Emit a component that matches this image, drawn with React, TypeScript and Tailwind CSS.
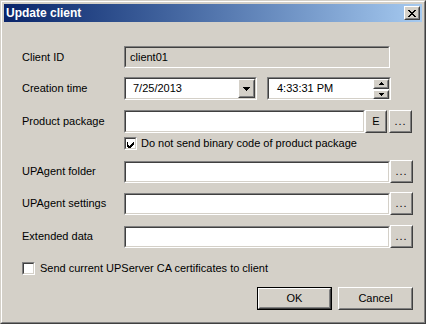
import React from 'react';
import cn from 'clsx';

const Sunken: React.FC<{ className?: string; inner?: string; bg?: string; children?: React.ReactNode }> = ({
  className,
  inner,
  bg = 'bg-white',
  children
}) => (
  <div className={cn('border border-t-[#808080] border-l-[#808080] border-b-white border-r-white', className)}>
    <div className={cn('h-full border border-t-[#404040] border-l-[#404040] border-b-[#d4d0c8] border-r-[#d4d0c8]', bg, inner)}>
      {children}
    </div>
  </div>
);

const Raised: React.FC<{ className?: string; inner?: string; children?: React.ReactNode }> = ({ className, inner, children }) => (
  <div className={cn('border border-t-white border-l-white border-b-[#404040] border-r-[#404040] bg-[#d4d0c8]', className)}>
    <div className={cn('h-full border border-t-[#d4d0c8] border-l-[#d4d0c8] border-b-[#808080] border-r-[#808080] flex items-center justify-center', inner)}>
      {children}
    </div>
  </div>
);

const Check: React.FC<{ checked?: boolean }> = ({ checked }) => (
  <Sunken className="w-[13px] h-[13px] shrink-0">
    {checked && (
      <svg width="9" height="9" viewBox="0 0 9 9" shapeRendering="crispEdges">
        <path d="M1 3h1v3h1v1h1v-1h1v-1h1v-1h1v-1h1v3h-1v1h-1v1h-1v1h-1v1h-1v-1h-1v-1h-1z" fill="#000" />
      </svg>
    )}
  </Sunken>
);

const Dots = () => <span className="tracking-[1px] leading-none">...</span>;

const Label: React.FC<{ children: React.ReactNode }> = ({ children }) => (
  <div className="w-[102px] shrink-0">{children}</div>
);

export default function App() {
  return (
    <div className="w-[426px] h-[324px] border border-t-[#d4d0c8] border-l-[#d4d0c8] border-r-[#404040] border-b-[#404040] bg-[#d4d0c8] font-['Liberation_Sans',sans-serif] text-[11px] text-black select-none">
      <div className="h-full border border-t-white border-l-white border-r-[#808080] border-b-[#808080] p-[2px] flex flex-col">
        {/* title bar */}
        <div className="h-[18px] shrink-0 bg-linear-to-r from-[#0a246a] to-[#a6caf0] flex items-center pl-[2px] pr-[2px]">
          <span className="text-white font-bold text-[12px] flex-1">Update client</span>
          <Raised className="w-[16px] h-[14px]">
            <svg width="8" height="7" viewBox="0 0 8 7" shapeRendering="crispEdges">
              <path d="M0 0h2v1h1v1h2v-1h1v-1h2v1h-1v1h-1v1h-1v1h1v1h1v1h1v1h-2v-1h-1v-1h-2v1h-1v1h-2v-1h1v-1h1v-1h1v-1h-1v-1h-1v-1h-1z" fill="#000" />
            </svg>
          </Raised>
        </div>

        <div className="flex-1 pl-[18px] pr-[9px] flex flex-col">
          {/* Client ID */}
          <div className="flex items-center mt-[24px] h-[22px]">
            <Label>Client ID</Label>
            <Sunken className="w-[266px] h-[22px]" bg="bg-[#d4d0c8]" inner="flex items-center pl-[4px]">
              client01
            </Sunken>
          </div>

          {/* Creation time */}
          <div className="flex items-center mt-[9px] h-[23px]">
            <Label>Creation time</Label>
            <Sunken className="w-[133px] h-[23px]" inner="flex items-center justify-between pl-[7px] pr-0">
              <span>7/25/2013</span>
              <Raised className="w-[17px] h-[19px]">
                <svg width="7" height="4" viewBox="0 0 7 4" shapeRendering="crispEdges">
                  <path d="M0 0h7v1h-1v1h-1v1h-1v1h-1v-1h-1v-1h-1v-1h-1z" fill="#000" />
                </svg>
              </Raised>
            </Sunken>
            <Sunken className="w-[124px] h-[23px] ml-[10px]" inner="flex items-center justify-between pl-[8px] pr-0">
              <span>4:33:31 PM</span>
              <div className="flex flex-col gap-[1px]">
                <Raised className="w-[16px] h-[10px]">
                  <svg width="5" height="3" viewBox="0 0 5 3" shapeRendering="crispEdges">
                    <path d="M2 0h1v1h1v1h1v1h-5v-1h1v-1h1z" fill="#000" />
                  </svg>
                </Raised>
                <Raised className="w-[16px] h-[9px]">
                  <svg width="5" height="3" viewBox="0 0 5 3" shapeRendering="crispEdges">
                    <path d="M0 0h5v1h-1v1h-1v1h-1v-1h-1v-1h-1z" fill="#000" />
                  </svg>
                </Raised>
              </div>
            </Sunken>
          </div>

          {/* Product package */}
          <div className="flex items-center mt-[10px] h-[23px]">
            <Label>Product package</Label>
            <Sunken className="w-[241px] h-[23px]" />
            <Raised className="w-[22px] h-[23px]">E</Raised>
            <Raised className="w-[23px] h-[23px] ml-[2px]"><Dots /></Raised>
          </div>

          <div className="flex items-center mt-[4px] h-[13px] pl-[102px] gap-[4px]">
            <Check checked />
            <span>Do not send binary code of product package</span>
          </div>

          {/* UPAgent folder */}
          <div className="flex items-center mt-[10px] h-[23px]">
            <Label>UPAgent folder</Label>
            <Sunken className="w-[266px] h-[22px]" />
            <Raised className="w-[23px] h-[23px]"><Dots /></Raised>
          </div>

          <div className="flex items-center mt-[9px] h-[23px]">
            <Label>UPAgent settings</Label>
            <Sunken className="w-[266px] h-[22px]" />
            <Raised className="w-[23px] h-[23px]"><Dots /></Raised>
          </div>

          <div className="flex items-center mt-[10px] h-[23px]">
            <Label>Extended data</Label>
            <Sunken className="w-[266px] h-[22px]" />
            <Raised className="w-[23px] h-[23px]"><Dots /></Raised>
          </div>

          <div className="flex items-center mt-[14px] h-[13px] gap-[5px]">
            <Check />
            <span>Send current UPServer CA certificates to client</span>
          </div>

          <div className="flex justify-end mt-[12px] gap-[6px] pr-[0px]">
            <div className="w-[75px] h-[23px] border border-black">
              <Raised className="h-full">OK</Raised>
            </div>
            <Raised className="w-[75px] h-[23px]">Cancel</Raised>
          </div>
        </div>
      </div>
    </div>
  );
}
